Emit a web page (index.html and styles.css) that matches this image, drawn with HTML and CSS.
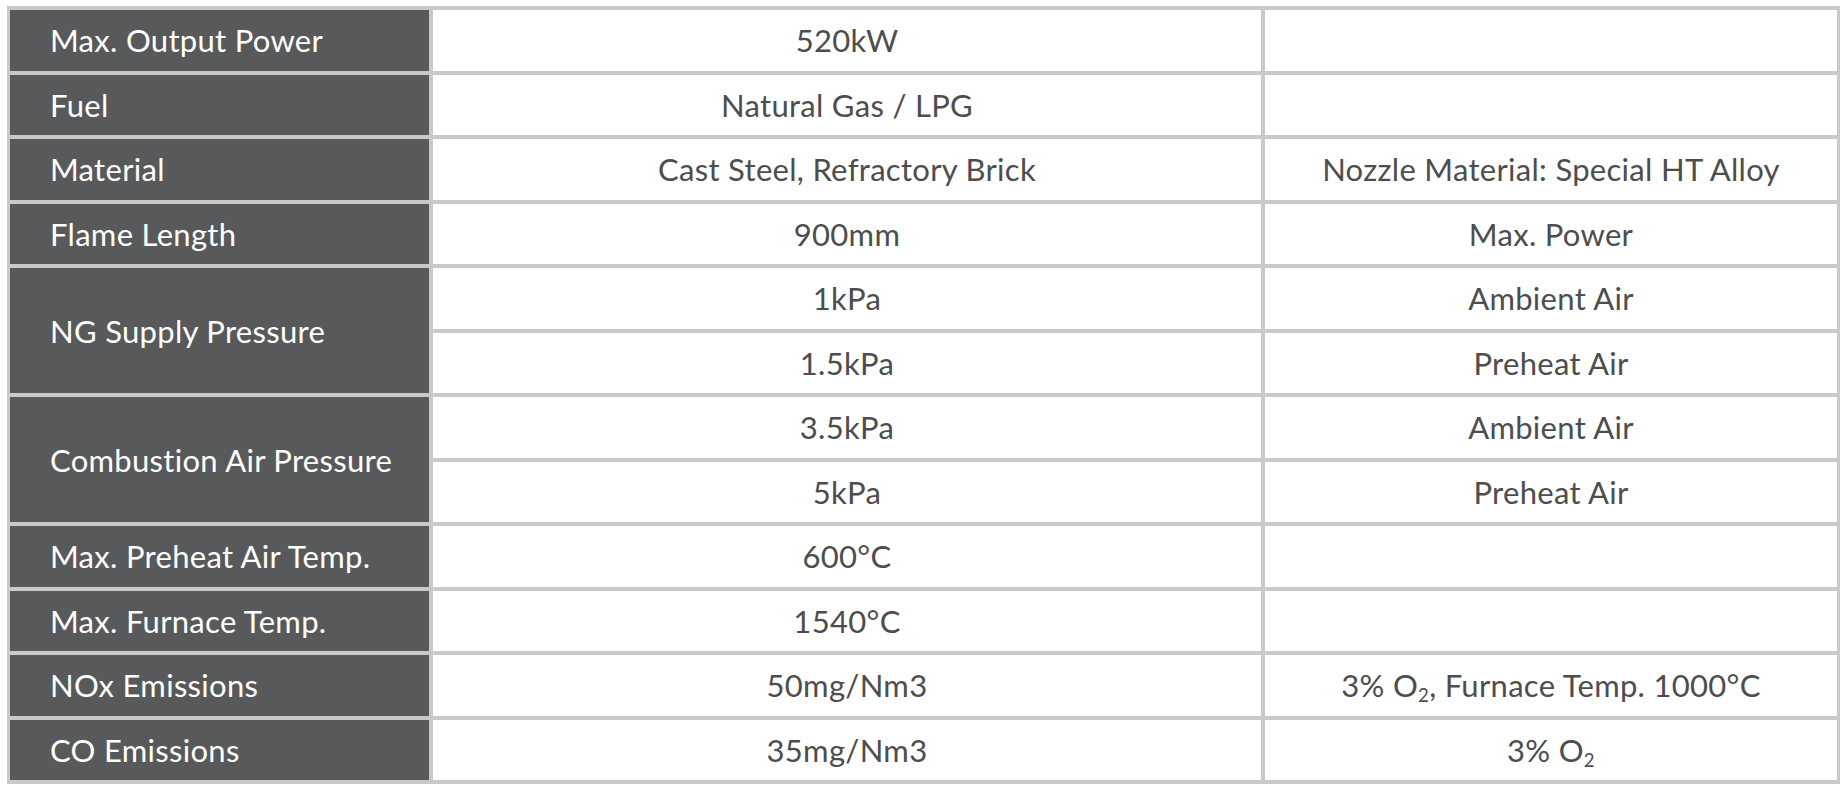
FILE: index.html
```html
<!DOCTYPE html>
<html>
<head>
<meta charset="utf-8">
<link rel="stylesheet" href="styles.css">
</head>
<body>
<div class="wrap">
  <div class="spec">
    <div class="label">Max. Output Power</div><div class="val">520kW</div><div class="val"></div>
    <div class="label">Fuel</div><div class="val">Natural Gas / LPG</div><div class="val"></div>
    <div class="label">Material</div><div class="val">Cast Steel, Refractory Brick</div><div class="val">Nozzle Material: Special HT Alloy</div>
    <div class="label">Flame Length</div><div class="val">900mm</div><div class="val">Max. Power</div>
    <div class="label span2">NG Supply Pressure</div><div class="val">1kPa</div><div class="val">Ambient Air</div>
    <div class="val">1.5kPa</div><div class="val">Preheat Air</div>
    <div class="label span2">Combustion Air Pressure</div><div class="val">3.5kPa</div><div class="val">Ambient Air</div>
    <div class="val">5kPa</div><div class="val">Preheat Air</div>
    <div class="label">Max. Preheat Air Temp.</div><div class="val">600°C</div><div class="val"></div>
    <div class="label">Max. Furnace Temp.</div><div class="val">1540°C</div><div class="val"></div>
    <div class="label">NOx Emissions</div><div class="val">50mg/Nm3</div><div class="val">3% O<sub class="sub">2</sub>, Furnace Temp. 1000°C</div>
    <div class="label">CO Emissions</div><div class="val">35mg/Nm3</div><div class="val">3% O<sub class="sub">2</sub></div>
  </div>
</div>
</body>
</html>
```
FILE: styles.css
```css
html, body {
  margin: 0;
  padding: 0;
  background: #ffffff;
}
.wrap {
  padding: 6px 0 0 7px;
}
.spec {
  display: grid;
  grid-template-columns: 419px 828px 572px;
  grid-template-rows: repeat(12, 1fr);
  gap: 4px;
  padding: 4px 3px;
  width: 1833px;
  height: 778px;
  box-sizing: border-box;
  background: #c9c9c9;
  font-family: "Lato", "Open Sans", sans-serif;
  font-size: 31px;
  letter-spacing: 0.3px;
}
.label {
  background: #58595b;
  color: #ffffff;
  display: flex;
  align-items: center;
  padding-left: 40px;
}
.span2 {
  grid-row: span 2;
}
.val {
  background: #ffffff;
  color: #4d4d4d;
  display: flex;
  align-items: center;
  justify-content: center;
  white-space: pre;
}
.sub {
  font-size: 0.6em;
  position: relative;
  top: 0.55em;
  vertical-align: baseline;
}
```
